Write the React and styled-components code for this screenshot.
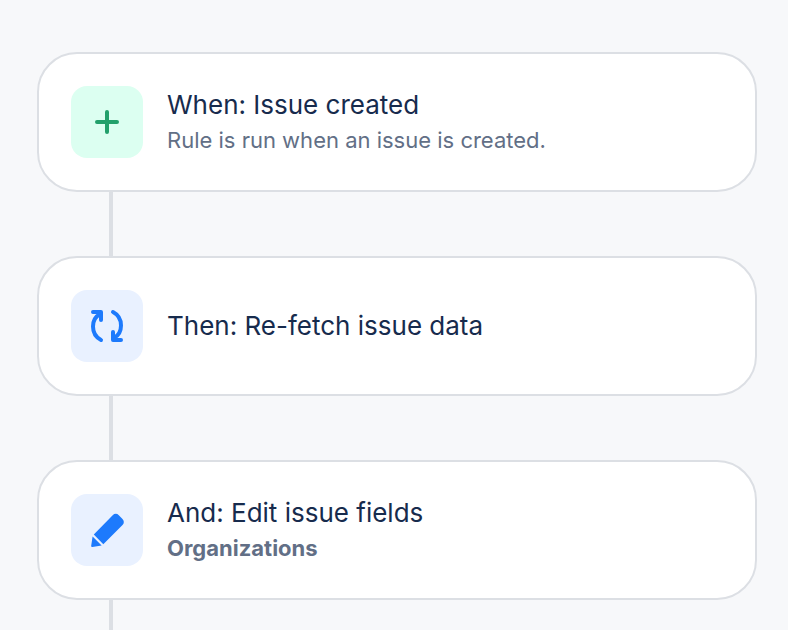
import React from 'react';
import styled, { createGlobalStyle } from 'styled-components';

const GlobalStyle = createGlobalStyle`
  * {
    box-sizing: border-box;
  }

  body {
    margin: 0;
    background: #f7f8fa;
    color: #172b4d;
    font-family: Inter, 'Liberation Sans', sans-serif;
  }
`;

const Page = styled.main`
  min-height: 100vh;
  padding: 52px 31px 0 37px;
  display: flex;
  flex-direction: column;
`;

const RuleChain = styled.ol`
  list-style: none;
  margin: 0;
  padding: 0;
  flex: 1;
  display: flex;
  flex-direction: column;
`;

const Step = styled.li`
  display: flex;
  flex-direction: column;

  &:last-child {
    flex: 1;
  }
`;

const Card = styled.article`
  min-height: 140px;
  padding: 32px;
  display: flex;
  align-items: center;
  gap: 24px;
  background: #ffffff;
  border: 2px solid #dcdfe4;
  border-radius: 40px;
`;

const IconTile = styled.div`
  width: 72px;
  height: 72px;
  flex: none;
  display: flex;
  align-items: center;
  justify-content: center;
  border-radius: 16px;
  background: ${({ $tone }) => ($tone === 'green' ? '#dcfff1' : '#e9f1ff')};
  color: ${({ $tone }) => ($tone === 'green' ? '#22a06b' : '#1d7afc')};
`;

const CardText = styled.div`
  min-width: 0;
`;

const Title = styled.h2`
  margin: 0;
  font-size: 26px;
  font-weight: 400;
  line-height: 36px;
`;

const Description = styled.p`
  margin: 0;
  color: #626f86;
  font-size: 22px;
  font-weight: ${({ $bold }) => ($bold ? 700 : 400)};
  line-height: 34px;
`;

const Connector = styled.div`
  width: 4px;
  min-height: ${({ $open }) => ($open ? '30px' : '64px')};
  flex: ${({ $open }) => ($open ? 1 : 'none')};
  margin-left: 72px;
  background: #dcdfe4;
`;

const Glyph = styled.svg`
  width: 48px;
  height: 48px;
  display: block;
`;

const PlusIcon = () => (
  <Glyph viewBox="0 0 48 48" fill="none" stroke="currentColor" strokeWidth="4" strokeLinecap="round" aria-hidden="true">
    <path d="M24 14v20M14 24h20" />
  </Glyph>
);

const RefreshIcon = () => (
  <Glyph
    viewBox="0 0 48 48"
    fill="none"
    stroke="currentColor"
    strokeWidth="4"
    strokeLinecap="round"
    strokeLinejoin="round"
    aria-hidden="true"
  >
    <path d="M10 10h8v8M17 12C12.500 14.500 10 19 10 24.500C10 30.500 13.200 35.500 18 38" />
    <path d="M38 38h-8v-8M31 36C35.500 33.500 38 29 38 23.500C38 17.500 34.800 12.500 30 10" />
  </Glyph>
);

const EditIcon = () => (
  <Glyph viewBox="0 0 48 48" fill="currentColor" aria-hidden="true">
    <path d="M10.800 28.500L29.700 9.200C31.500 7.400 34 7.400 35.800 9.200L39.500 12.900C41.300 14.700 41.300 17.200 39.500 19L20.300 38.200Z" />
    <path d="M9.600 30.600L18.600 39.500L9.400 41Q8 41.200 8.200 39.800Z" />
  </Glyph>
);

const steps = [
  {
    title: 'When: Issue created',
    description: 'Rule is run when an issue is created.',
    tone: 'green',
    icon: PlusIcon,
  },
  { title: 'Then: Re-fetch issue data', tone: 'blue', icon: RefreshIcon },
  {
    title: 'And: Edit issue fields',
    description: 'Organizations',
    bold: true,
    tone: 'blue',
    icon: EditIcon,
  },
];

const RuleStep = ({ step, last }) => {
  const Icon = step.icon;

  return (
    <Step>
      <Card>
        <IconTile $tone={step.tone}>
          <Icon />
        </IconTile>
        <CardText>
          <Title>{step.title}</Title>
          {step.description && <Description $bold={step.bold}>{step.description}</Description>}
        </CardText>
      </Card>
      <Connector $open={last} />
    </Step>
  );
};

const App = () => (
  <>
    <GlobalStyle />
    <Page>
      <RuleChain>
        {steps.map((step, index) => (
          <RuleStep key={step.title} step={step} last={index === steps.length - 1} />
        ))}
      </RuleChain>
    </Page>
  </>
);

export default App;
